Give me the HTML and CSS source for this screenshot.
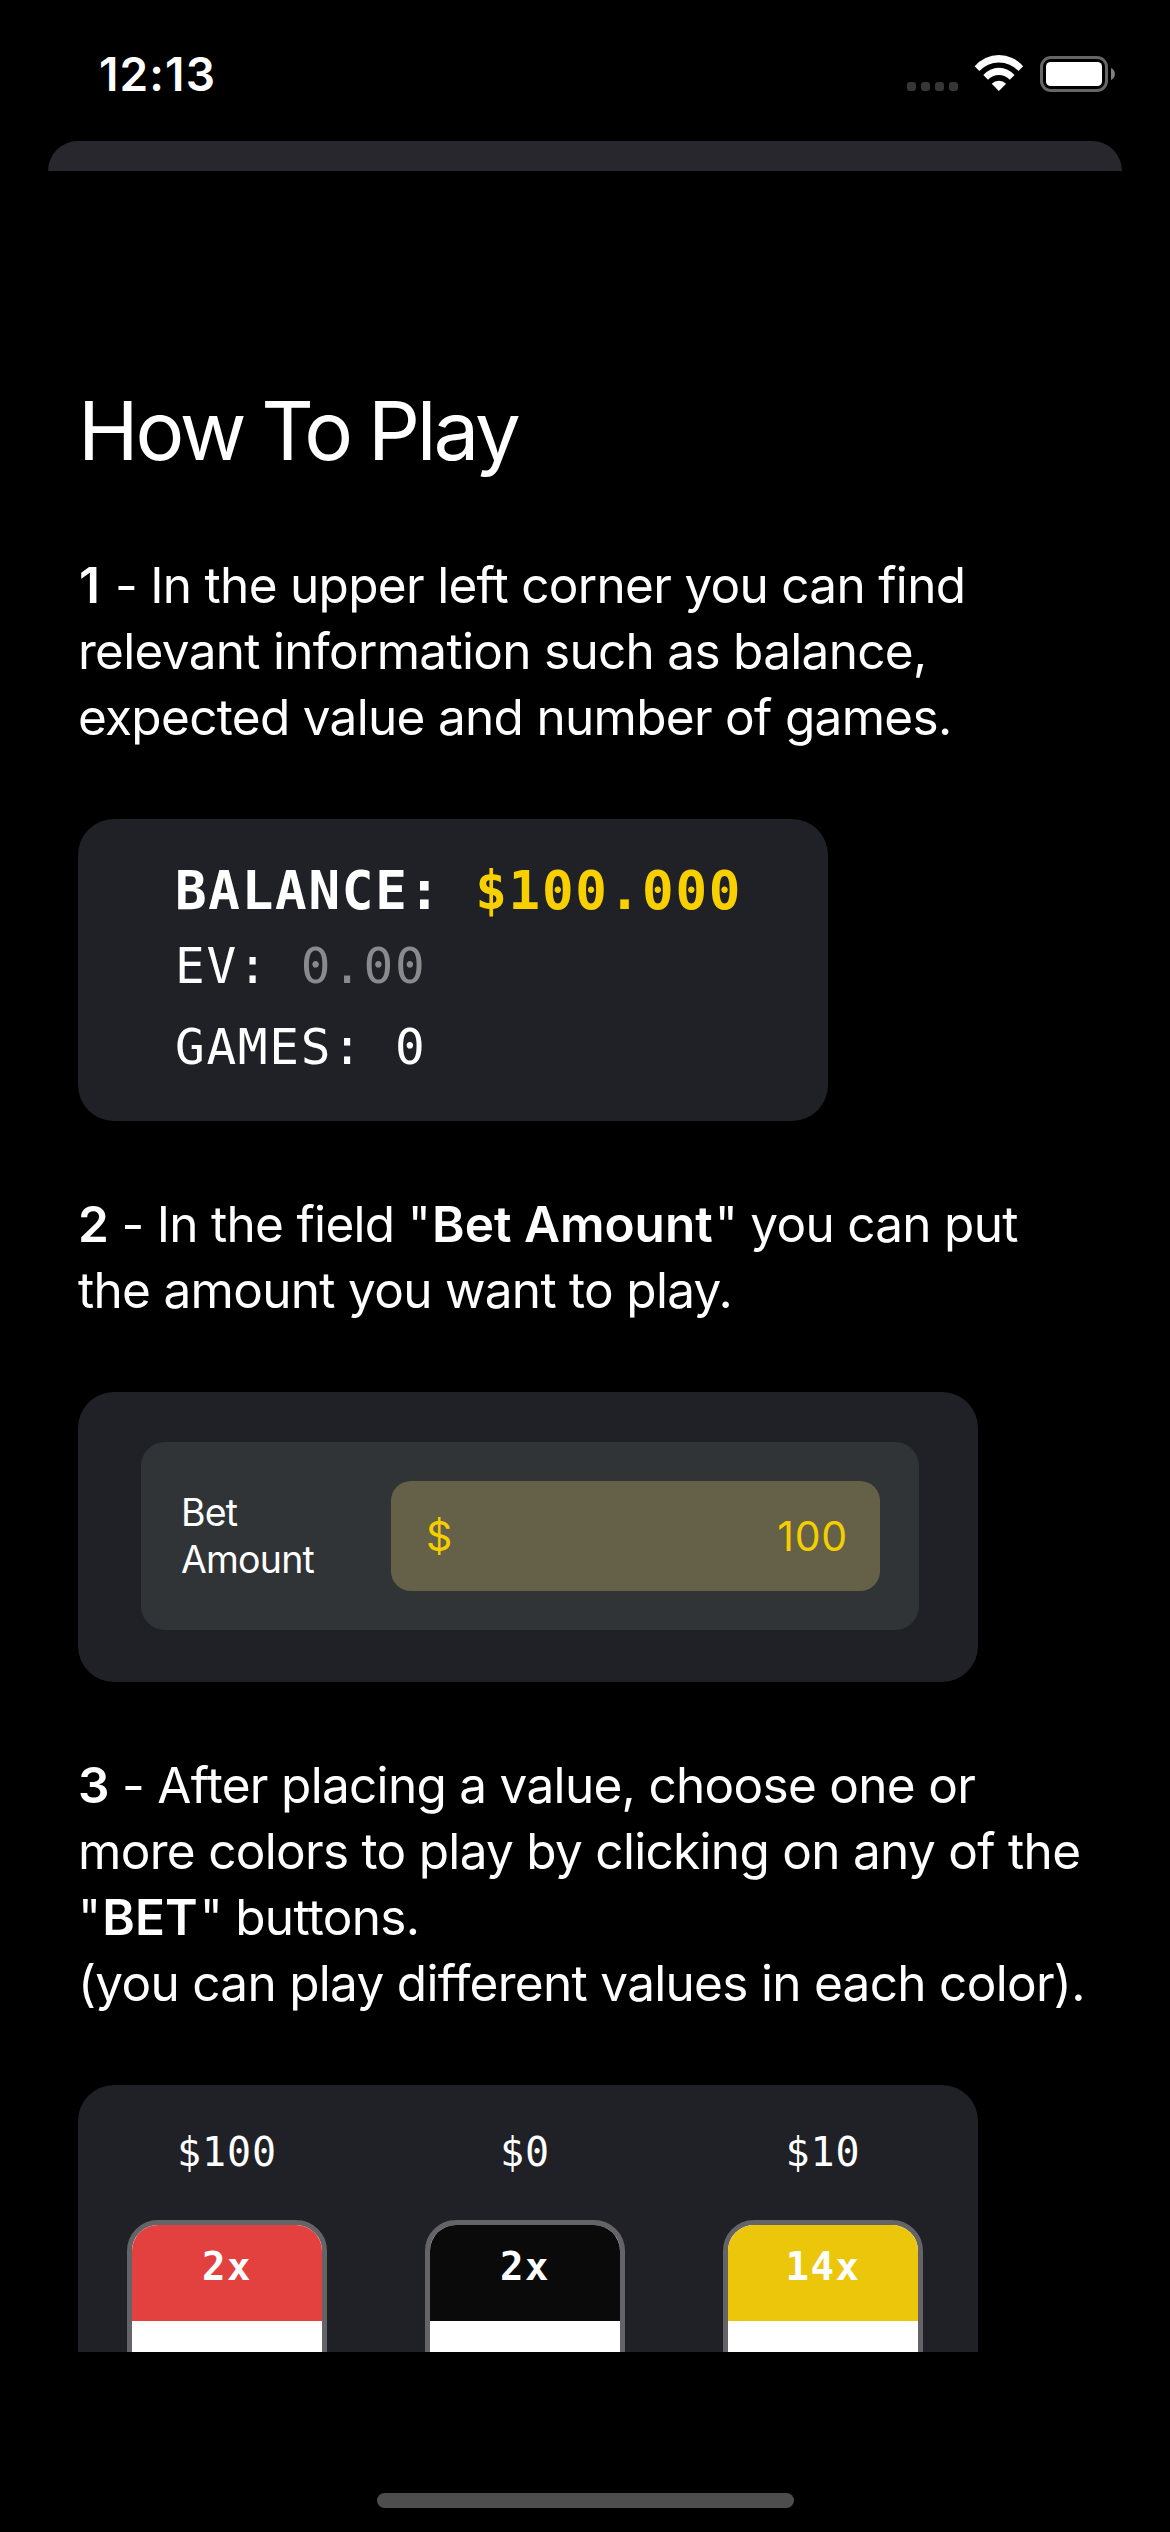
FILE: index.html
```html
<!DOCTYPE html>
<html lang="en">
<head>
<meta charset="utf-8">
<title>How To Play</title>
<link rel="stylesheet" href="styles.css">
</head>
<body>
<div class="screen">
  <header class="status">
    <span class="time">12:13</span>
    <svg class="indicators" width="210" height="44" viewBox="0 0 210 44">
      <g fill="#363636">
        <rect x="2" y="30" width="9" height="9" rx="3"/>
        <rect x="16" y="30" width="9" height="9" rx="3"/>
        <rect x="30" y="30" width="9" height="9" rx="3"/>
        <rect x="44" y="30" width="9" height="9" rx="3"/>
      </g>
      <g fill="#fff">
        <path d="M69.7 14.3 A31.6 31.6 0 0 1 118.1 14.3 L113.5 19 A27 27 0 0 0 74.3 19 Z"/>
        <path d="M78.3 23 A20.5 20.5 0 0 1 109.5 23 L104.8 27.7 A15 15 0 0 0 83 27.7 Z"/>
        <path d="M86.7 31.8 A10 10 0 0 1 101.1 31.8 L93.9 39 Z"/>
      </g>
      <rect x="136.5" y="5.5" width="65" height="33" rx="9.5" fill="none" stroke="#666" stroke-width="3"/>
      <rect x="141" y="10" width="56" height="24" rx="4.5" fill="#fff"/>
      <path d="M206 16 A6.6 6.6 0 0 1 206 28 Z" fill="#808080"/>
    </svg>
  </header>
  <div class="sheet-edge"></div>

  <main class="guide">
    <h1>How To Play</h1>

    <p><b class="first">1</b> - In the upper left corner you can find<br>relevant information such as balance,<br>expected value and number of games.</p>

    <section class="card balance-card">
      <div class="balance">BALANCE: <span class="gold">$100.000</span></div>
      <div class="ev">EV: <span class="muted">0.00</span></div>
      <div class="games">GAMES: 0</div>
    </section>

    <p><b>2</b> - In the field "<b class="term">Bet Amount</b>" you can put<br>the amount you want to play.</p>

    <section class="card bet-card">
      <div class="bet-panel">
        <span class="bet-label">Bet<br>Amount</span>
        <div class="bet-field"><span>$</span><span>100</span></div>
      </div>
    </section>

    <p><b>3</b> - After placing a value, choose one or<br>more colors to play by clicking on any of the<br>"<b class="term">BET</b>" buttons.<br>(you can play different values in each color).</p>

    <section class="card colors-card">
      <div class="option"><span class="stake">$100</span><div class="slot"><div class="odds red">2x</div></div></div>
      <div class="option"><span class="stake">$0</span><div class="slot"><div class="odds black">2x</div></div></div>
      <div class="option"><span class="stake">$10</span><div class="slot"><div class="odds yellow">14x</div></div></div>
    </section>
  </main>

  <div class="home-indicator"></div>
</div>
</body>
</html>
```
FILE: styles.css
```css
* { box-sizing: border-box; }

body {
  margin: 0;
  background: #000;
  color: #fff;
  font-family: Inter, "Liberation Sans", sans-serif;
}

.screen {
  display: flex;
  flex-direction: column;
  width: 1170px;
  height: 2532px;
  overflow: hidden;
}

.status {
  display: flex;
  justify-content: space-between;
  align-items: flex-start;
  height: 141px;
  padding: 52px 56px 0 99px;
}

.time {
  font-size: 46px;
  font-weight: 600;
  line-height: 44px;
  letter-spacing: 1.1px;
}

.sheet-edge {
  height: 30px;
  margin: 0 48px;
  border-radius: 30px 30px 0 0;
  background: #28272d;
}

.indicators { margin-right: -1px; }

.guide {
  height: 2181px;
  padding: 210px 0 0 78px;
  overflow: hidden;
}

h1 {
  margin: 0 0 71px;
  font-size: 81.5px;
  font-weight: 400;
  line-height: 100px;
  letter-spacing: -3.1px;
  word-spacing: -2px;
}

p {
  margin: 0;
  font-size: 49.5px;
  line-height: 66px;
  letter-spacing: -0.7px;
  white-space: nowrap;
}

b { font-weight: 600; }

.first { margin: 0 2.5px 0 1px; }

.term {
  margin: 0 2px;
  letter-spacing: 0;
}

.card {
  width: 900px;
  border-radius: 36px;
  background: #202126;
}

.balance-card {
  width: 750px;
  height: 302px;
  margin: 69px 0 70px;
  padding: 34px 0 0 97px;
  font: 49.4px "DejaVu Sans Mono", monospace;
  letter-spacing: 1.7px;
  white-space: nowrap;
}

.balance {
  font-size: 52.5px;
  font-weight: 700;
  line-height: 76px;
  letter-spacing: 1.75px;
}

.ev { line-height: 74px; }
.games { line-height: 88px; }
.gold { color: #f8d000; }
.muted { color: #8a8a8e; }

.bet-card {
  height: 290px;
  margin: 69px 0 70px;
  padding: 50px 59px 0 63px;
}

.bet-panel {
  display: flex;
  justify-content: space-between;
  align-items: center;
  height: 188px;
  padding: 0 39px 0 40px;
  border-radius: 24px;
  background: #303437;
}

.bet-label {
  font-size: 37.5px;
  line-height: 47px;
  letter-spacing: -0.8px;
}

.bet-field {
  display: flex;
  justify-content: space-between;
  align-items: center;
  width: 489px;
  height: 110px;
  padding: 0 32px 0 35px;
  border-radius: 20px;
  background: #656048;
  color: #f5ce00;
  font-size: 41px;
  letter-spacing: 0.8px;
}

.colors-card {
  display: flex;
  gap: 98px;
  height: 600px;
  margin-top: 69px;
  padding: 37px 0 0 48.5px;
}

.option {
  display: flex;
  flex-direction: column;
  gap: 38px;
  width: 200px;
  font-family: "DejaVu Sans Mono", monospace;
  text-align: center;
}

.stake {
  padding-left: 1px;
  font-size: 40px;
  line-height: 60px;
  letter-spacing: 0.9px;
}

.slot {
  height: 420px;
  border: 5px solid #646468;
  border-radius: 31px;
  background: #fff;
  overflow: hidden;
}

.odds {
  height: 96px;
  padding-left: 1px;
  font-size: 39px;
  font-weight: 700;
  line-height: 83px;
  letter-spacing: 1.5px;
}

.red { background: #e34140; }
.black { background: #0a0a0a; }
.yellow { background: #ebc60b; }

.home-indicator {
  width: 417px;
  height: 15px;
  margin: 141px auto 0;
  border-radius: 8px;
  background: #4d4d4d;
}
```
